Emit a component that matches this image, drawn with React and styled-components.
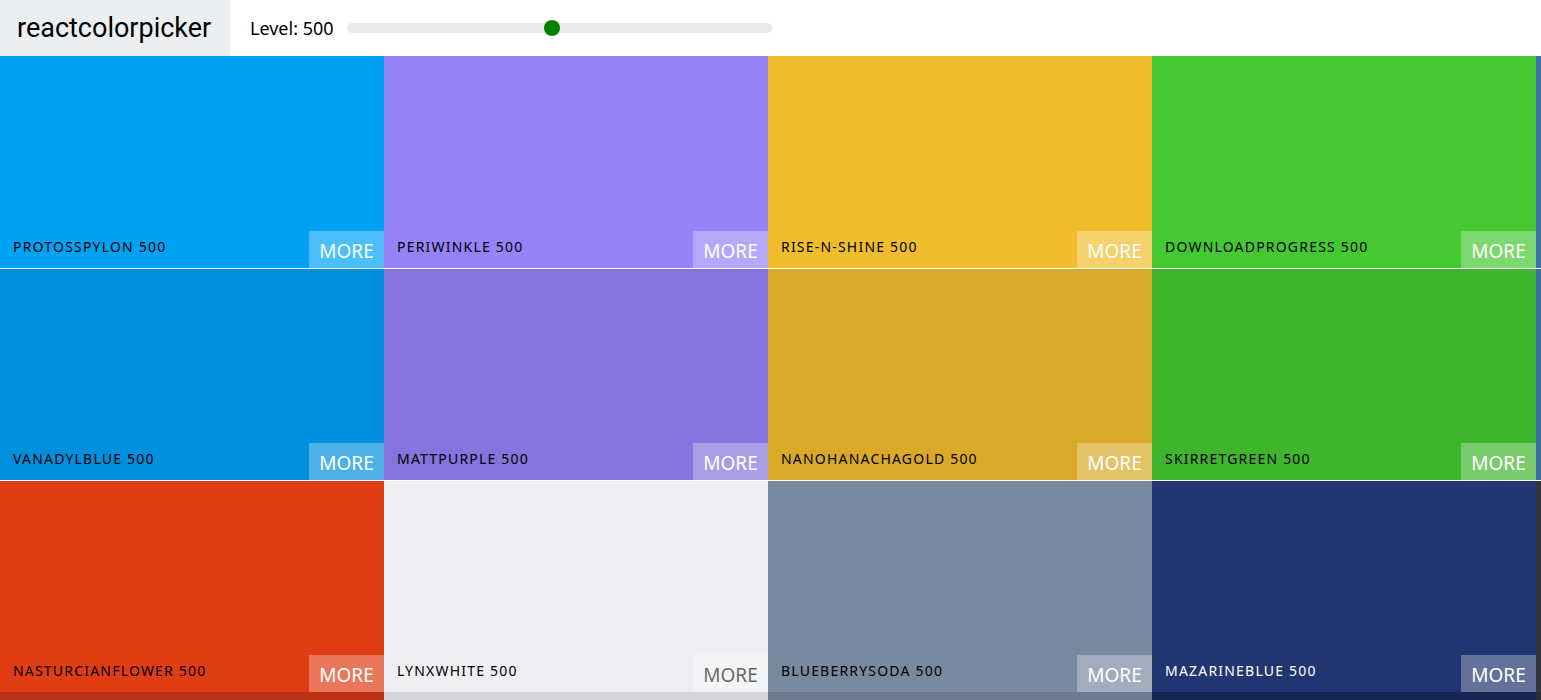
import styled, { createGlobalStyle } from "styled-components";

const GlobalStyle = createGlobalStyle`
  html, body {
    margin: 0;
    padding: 0;
    height: 100%;
    overflow: hidden;
    background: #fff;
  }
  body {
    font-family: "Noto Sans", "Open Sans", sans-serif;
  }
`;

const rows = [
  [
    { name: "protosspylon", color: "#00a2f5" },
    { name: "periwinkle", color: "#9683f9" },
    { name: "rise-n-shine", color: "#f1bd2c" },
    { name: "downloadprogress", color: "#44c932" },
    { name: "seabrook", color: "#3d72aa" },
  ],
  [
    { name: "vanadylblue", color: "#0090de" },
    { name: "mattpurple", color: "#8573de" },
    { name: "nanohanachagold", color: "#d9a927" },
    { name: "skirretgreen", color: "#3fb52e" },
    { name: "naval", color: "#3a6ea4" },
  ],
  [
    { name: "nasturcianflower", color: "#e03d15" },
    { name: "lynxwhite", color: "#eeeff3", light: true },
    { name: "blueberrysoda", color: "#79899f" },
    { name: "mazarineblue", color: "#213670", dark: true },
    { name: "bluenights", color: "#30353f", dark: true },
  ],
  [
    { name: "harleydavidsonorange", color: "#bb3313" },
    { name: "hintofpensive", color: "#d4d5d9", light: true },
    { name: "chainganggrey", color: "#6b7a8c" },
    { name: "picovoid", color: "#172652", dark: true },
    { name: "electromagnetic", color: "#2a2f38", dark: true },
  ],
];

const Page = styled.div`
  display: flex;
  flex-direction: column;
  height: 100vh;
`;

const Navbar = styled.header`
  display: flex;
  align-items: center;
  height: 56px;
  flex-shrink: 0;
`;

const Logo = styled.div`
  display: flex;
  align-items: center;
  width: 230px;
  height: 100%;
  padding-left: 17px;
  box-sizing: border-box;
  background: #eceff1;
  font-family: Roboto, sans-serif;
  font-size: 27px;
  color: #000;
`;

const LevelArea = styled.div`
  display: flex;
  align-items: center;
  margin-left: 20px;
`;

const LevelLabel = styled.span`
  font-size: 18px;
  color: #000;
`;

const Track = styled.div`
  position: relative;
  width: 425px;
  height: 10px;
  margin-left: 13px;
  border-radius: 5px;
  background: #e9e9e9;
`;

const Handle = styled.div`
  position: absolute;
  top: 50%;
  width: 16px;
  height: 16px;
  border-radius: 50%;
  background: green;
  transform: translate(-50%, -50%);
`;

const Palette = styled.div`
  display: grid;
  grid-template-columns: repeat(4, 384px) 1fr;
  grid-template-rows: 213px 212px 211px 211px;
  flex: 1;
`;

const Box = styled.div`
  display: flex;
  align-items: flex-end;
  justify-content: space-between;
  background: ${(p) => p.$color};
  box-sizing: border-box;
  border-bottom: ${(p) => (p.$divider ? "1px solid #fff" : "none")};
  overflow: hidden;
`;

const Name = styled.span`
  padding: 0 0 12px 13px;
  font-size: 14px;
  letter-spacing: 1.2px;
  text-transform: uppercase;
  white-space: nowrap;
  color: ${(p) => (p.$dark ? "#fff" : "#000")};
`;

const More = styled.button`
  width: 75px;
  height: 37px;
  padding: 2px 0 0;
  border: none;
  background: rgba(255, 255, 255, 0.3);
  font-family: "Noto Sans", "Open Sans", sans-serif;
  font-size: 19px;
  text-transform: uppercase;
  color: ${(p) => (p.$light ? "rgba(0, 0, 0, 0.6)" : "#fff")};
  flex-shrink: 0;
`;

const Level = 500;

export default function App() {
  return (
    <>
      <GlobalStyle />
      <Page>
        <Navbar>
          <Logo>reactcolorpicker</Logo>
          <LevelArea>
            <LevelLabel>Level: {Level}</LevelLabel>
            <Track>
              <Handle style={{ left: "48.3%" }} />
            </Track>
          </LevelArea>
        </Navbar>
        <Palette>
          {rows.map((row, r) =>
            row.map((c, i) => (
              <Box key={c.name} $color={c.color} $divider={r < 2}>
                {i < 4 && r < 3 && (
                  <>
                    <Name $dark={c.dark}>
                      {c.name} {Level}
                    </Name>
                    <More $light={c.light}>more</More>
                  </>
                )}
              </Box>
            ))
          )}
        </Palette>
      </Page>
    </>
  );
}
